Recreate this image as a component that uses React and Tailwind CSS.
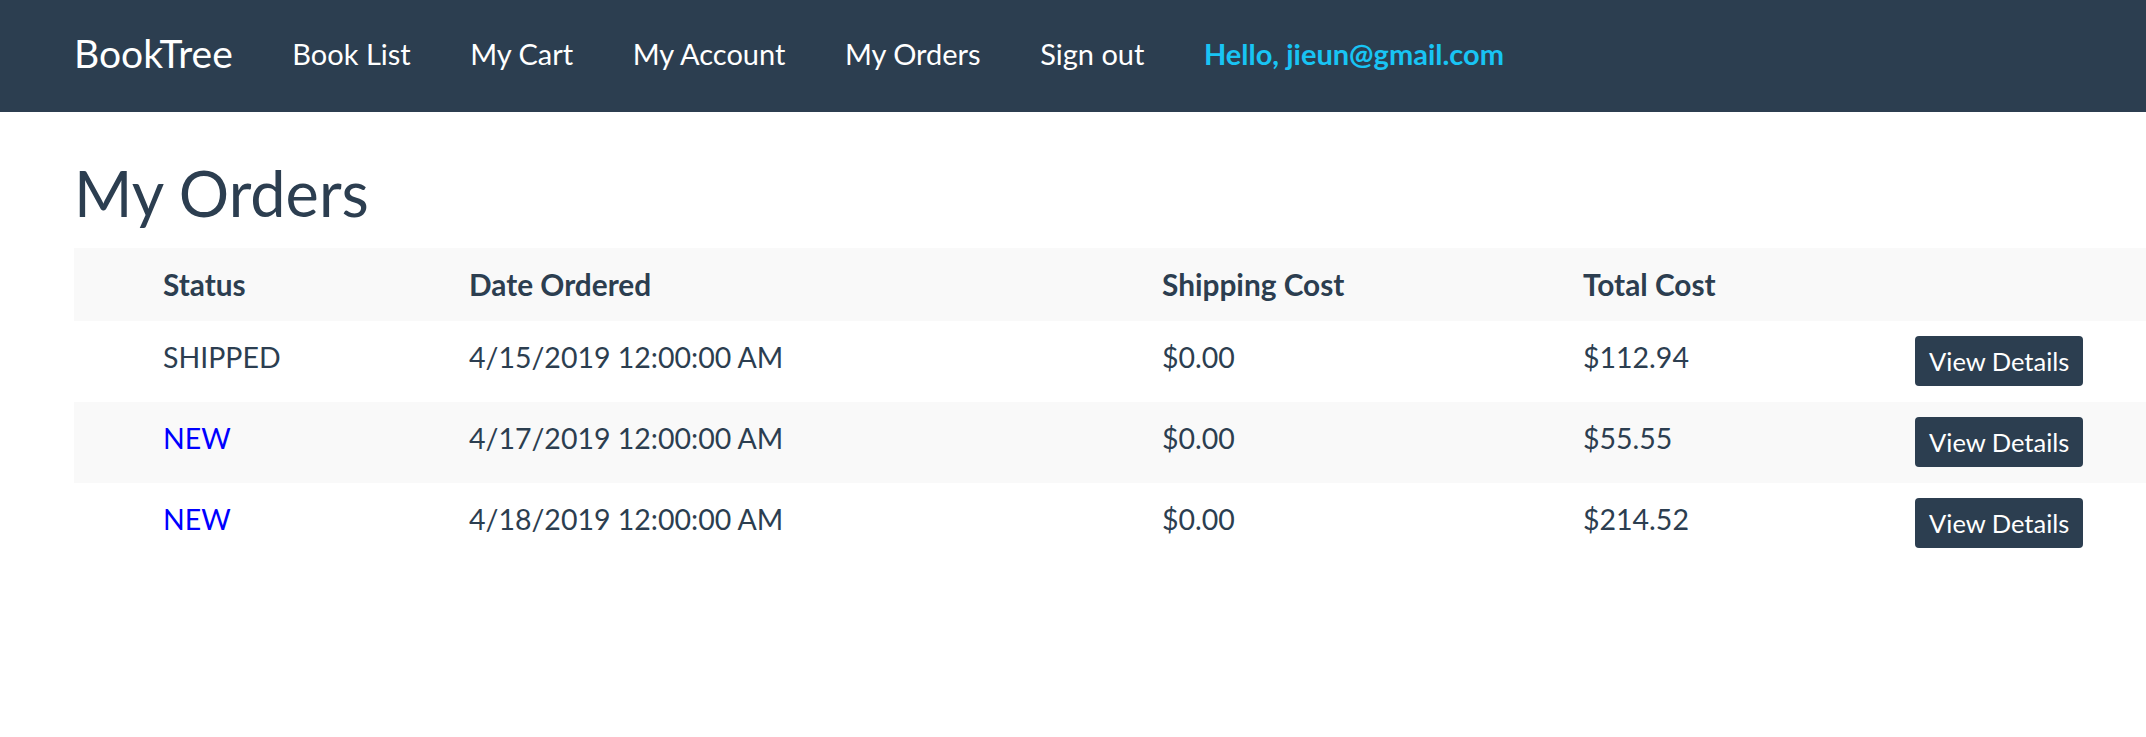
const orders = [
  { status: "SHIPPED", date: "4/15/2019 12:00:00 AM", shipping: "$0.00", total: "$112.94" },
  { status: "NEW", date: "4/17/2019 12:00:00 AM", shipping: "$0.00", total: "$55.55" },
  { status: "NEW", date: "4/18/2019 12:00:00 AM", shipping: "$0.00", total: "$214.52" },
];

const cols = "grid grid-cols-[74px_306px_693px_421px_332px_1fr]";

export default function App() {
  return (
    <div className="min-h-[737px] bg-white text-[#2c3e50] font-['Lato',_'Open_Sans',_sans-serif]">
      <nav className="h-[112px] bg-[#2c3e50] flex items-center pl-[74px] pb-[5px] gap-[59.5px] text-white text-[29px]">
        <a href="#" className="text-[39px]">BookTree</a>
        <a href="#">Book List</a>
        <a href="#">My Cart</a>
        <a href="#">My Account</a>
        <a href="#">My Orders</a>
        <a href="#">Sign out</a>
        <a href="#" className="font-bold text-[#18c4f4]">Hello, jieun@gmail.com</a>
      </nav>

      <div className="pl-[74px] pt-[47px]">
        <h1 className="text-[63px] leading-[68px] mb-[21px]">My Orders</h1>

        <div className="text-[28.5px] leading-[41px]">
          <div className={`${cols} h-[73px] items-center bg-[#f9f9f9] font-bold text-[29.8px]`}>
            <div />
            <div className="px-[15px]">Status</div>
            <div className="px-[15px]">Date Ordered</div>
            <div className="px-[15px]">Shipping Cost</div>
            <div className="px-[15px]">Total Cost</div>
            <div />
          </div>
          {orders.map((o, i) => (
            <div
              key={i}
              className={`${cols} h-[81px] ${i % 2 === 1 ? "bg-[#f9f9f9]" : "bg-white"}`}
            >
              <div />
              <div className={`px-[15px] pt-[16px] ${o.status === "NEW" ? "text-[#0000ff]" : ""}`}>
                {o.status}
              </div>
              <div className="px-[15px] pt-[16px]">{o.date}</div>
              <div className="px-[15px] pt-[16px]">{o.shipping}</div>
              <div className="px-[15px] pt-[16px]">{o.total}</div>
              <div className="px-[15px] pt-[15px]">
                <button className="h-[50px] px-[14px] rounded-[4px] bg-[#2c3e50] text-white text-[25.5px] leading-[50px]">
                  View Details
                </button>
              </div>
            </div>
          ))}
        </div>
      </div>
    </div>
  );
}
